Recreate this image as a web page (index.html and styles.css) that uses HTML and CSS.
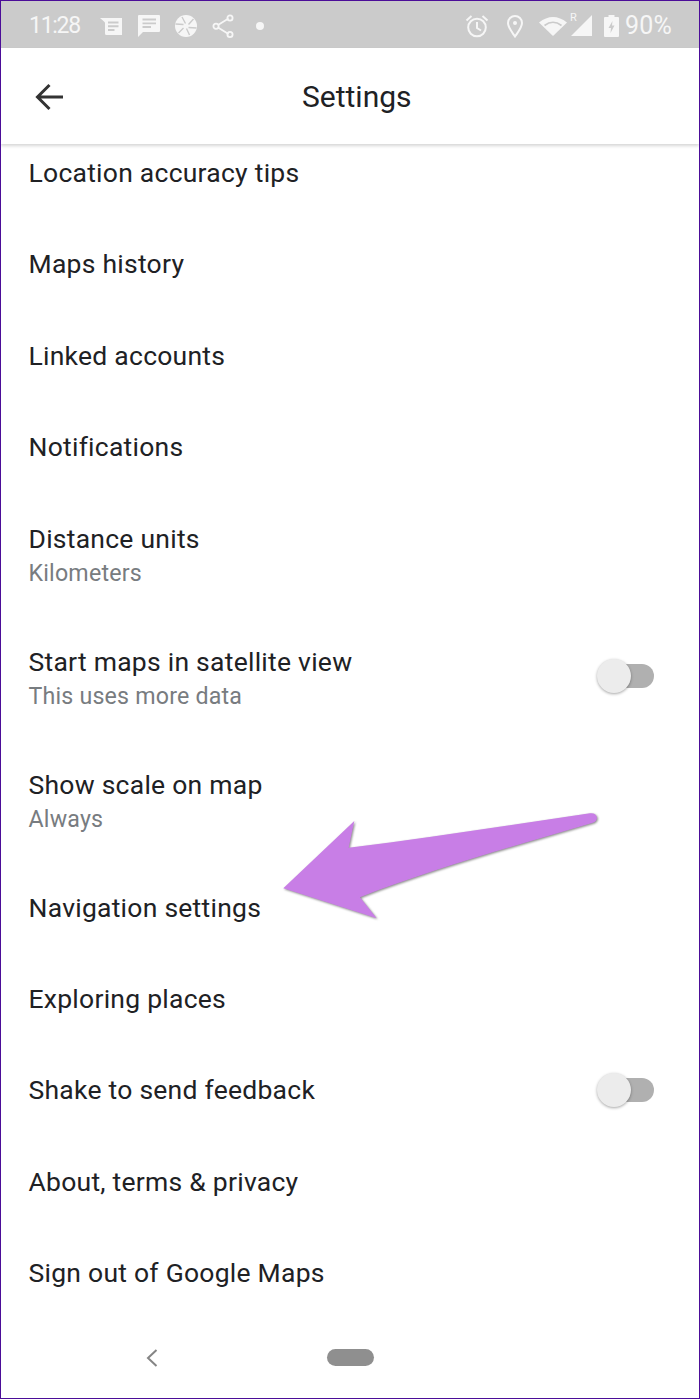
FILE: index.html
```html
<!doctype html>
<html>
<head>
  <meta charset="utf-8">
  <title>Settings</title>
  <link rel="stylesheet" href="styles.css">
</head>
<body>
<div class="phone">
  <div class="statusbar">
    <span class="clock">11:28</span>
    <div class="status-left">
      <svg viewBox="0 0 24 24"><path d="M0 4H22V21H6.500Q5 21 5 19.500V9Q5 8 4 7.500Z" fill="#f6f6f6"/><path d="M8 8.500H18.500M8 12.300H18.500M8 16H14.500" stroke="#cbcbcb" stroke-width="2"/></svg>
      <svg viewBox="0 0 24 24"><path d="M2 1H22Q23 1 23 2V17Q23 18 22 18H6L1 23V2Q1 1 2 1Z" fill="#f6f6f6"/><path d="M5.500 5.500H19M5.500 9.300H19M5.500 13H14" stroke="#cbcbcb" stroke-width="1.800"/></svg>
      <svg viewBox="0 0 24 24"><circle cx="12" cy="12" r="11" fill="#f6f6f6"/><path d="M8 3 11.500 9.500M19.500 5 14.500 10.500M22.500 14 14.500 13.500M15.500 21 12.500 14.500M4.500 19 9.500 14M1.500 10 9.500 10.500" stroke="#cbcbcb" stroke-width="1.400"/></svg>
      <svg viewBox="0 0 24 24" fill="none" stroke="#f6f6f6" stroke-width="1.800"><path d="M7 11 17.500 4.500M7 13.500 17.500 20"/><circle cx="5" cy="12.200" r="2.600"/><circle cx="19" cy="4" r="2.600"/><circle cx="19" cy="20.500" r="2.600"/></svg>
      <svg viewBox="0 0 24 24"><circle cx="12" cy="12" r="4" fill="#f6f6f6"/></svg>
    </div>
    <div class="status-right">
      <svg class="ic-alarm" viewBox="0 0 24 24" fill="none" stroke="#f6f6f6" stroke-width="2"><circle cx="12" cy="13.500" r="8.800"/><path d="M12 8V14L16 16.500M1.500 6.500 6.500 2M22.500 6.500 17.500 2"/></svg>
      <svg class="ic-pin" viewBox="0 0 18 24" fill="none" stroke="#f6f6f6" stroke-width="2"><path d="M9 22.500C6 18 2 13.500 2 9A7 7 0 0 1 16 9C16 13.500 12 18 9 22.500Z"/><circle cx="9" cy="9" r="2" fill="#f6f6f6" stroke="none"/></svg>
      <svg class="ic-wifi" viewBox="0 0 28 20"><path d="M0 6.500Q14 -4.500 28 6.500L14 20Z" fill="#f6f6f6"/><path d="M5.500 9.500Q14 3 22.500 9.500" fill="none" stroke="#cbcbcb" stroke-width="1.600"/></svg>
      <div class="signal">
        <span class="roam">R</span>
        <svg viewBox="0 0 21 21"><path d="M21 0V21H0Z" fill="#f6f6f6"/></svg>
      </div>
      <svg class="ic-batt" viewBox="0 0 15 22"><path d="M4.500 0H10.500V2H14Q15 2 15 3V21Q15 22 14 22H1Q0 22 0 21V3Q0 2 1 2H4.500Z" fill="#f6f6f6"/><path d="M8.500 6 4.500 13H7L6.500 18 10.500 10.500H8Z" fill="#cbcbcb"/></svg>
      <span class="pct">90%</span>
    </div>
  </div>

  <div class="appbar">
    <svg class="back" viewBox="0 0 28 28" fill="none" stroke="#333" stroke-width="3"><path d="M28 14H3M14.500 2 2.500 14 14.500 26"/></svg>
    <h1 class="title">Settings</h1>
  </div>

  <div class="list">
    <div class="row"><div class="name">Location accuracy tips</div></div>
    <div class="row"><div class="name">Maps history</div></div>
    <div class="row"><div class="name">Linked accounts</div></div>
    <div class="row"><div class="name">Notifications</div></div>
    <div class="row two">
      <div><div class="name">Distance units</div><div class="sub">Kilometers</div></div>
    </div>
    <div class="row two">
      <div><div class="name">Start maps in satellite view</div><div class="sub">This uses more data</div></div>
      <span class="toggle mid"><span class="knob"></span></span>
    </div>
    <div class="row two">
      <div><div class="name">Show scale on map</div><div class="sub">Always</div></div>
    </div>
    <div class="row"><div class="name">Navigation settings</div></div>
    <div class="row"><div class="name">Exploring places</div></div>
    <div class="row">
      <div class="name">Shake to send feedback</div>
      <span class="toggle"><span class="knob"></span></span>
    </div>
    <div class="row"><div class="name">About, terms &amp; privacy</div></div>
    <div class="row"><div class="name">Sign out of Google Maps</div></div>
  </div>

  <div class="navbar">
    <svg class="nav-back" viewBox="0 0 12 18" fill="none" stroke="#858585" stroke-width="2"><path d="M10.500 1 2 9 10.500 17"/></svg>
    <span class="pill"></span>
  </div>

  <!-- annotation arrow over the list -->
  <svg class="callout" viewBox="0 0 700 1399">
    <path d="M283.300 888.300 354.300 821 348.700 847.700C430 838 510 825 590 813.300Q596.500 812.800 597 818Q596.500 821.500 593 822.700C515 846 435 868 360 897.300L376.700 918.300Z" fill="#c87ee6"/>
  </svg>
</div>
</body>
</html>
```

FILE: styles.css
```css
* {
  box-sizing: border-box;
}
html, body {
  margin: 0;
  padding: 0;
}
.phone {
  position: relative;
  width: 700px;
  height: 1399px;
  border: 1px solid #4b0d98;
  background-color: #fff;
  display: flex;
  flex-direction: column;
  overflow: hidden;
  font-family: Roboto, "Liberation Sans", sans-serif;
  color: #202124;
}

/* Status bar */
.statusbar {
  height: 47px;
  flex-shrink: 0;
  background-color: #cbcbcb;
  color: #f6f6f6;
  display: flex;
  align-items: center;
  padding: 2px 27px 0 28px;
  font-size: 23px;
}
.clock {
  width: 70.5px;
  letter-spacing: -1.3px;
}
.statusbar svg {
  display: block;
}
.status-left {
  display: flex;
  gap: 13px;
}
.status-left svg {
  width: 24px;
  height: 24px;
}
.status-right {
  margin-left: auto;
  display: flex;
  align-items: center;
}
.ic-alarm {
  width: 24px;
  height: 24px;
}
.ic-pin {
  width: 18px;
  height: 24px;
  margin-left: 17px;
}
.ic-wifi {
  width: 28px;
  height: 20px;
  margin-left: 15px;
}
.signal {
  position: relative;
  width: 21px;
  height: 21px;
  margin-left: 4px;
}
.roam {
  position: absolute;
  left: -1px;
  top: -3px;
  font-size: 11px;
  line-height: 12px;
}
.ic-batt {
  width: 15px;
  height: 22px;
  margin-left: 12px;
}
.pct {
  margin-left: 6px;
  font-size: 25px;
  letter-spacing: 0.2px;
}

/* App bar */
.appbar {
  height: 96px;
  flex-shrink: 0;
  display: flex;
  align-items: center;
  position: relative;
  z-index: 1;
  padding-left: 34px;
  background-color: #fff;
  box-shadow: 0 2px 3px rgba(0, 0, 0, 0.16);
}
.back {
  width: 28px;
  height: 28px;
  margin-top: 2px;
}
.title {
  margin: 2px 0 0 239px;
  font-size: 30px;
  font-weight: 400;
  line-height: 34px;
  color: #202124;
}

/* Rows */
.list {
  flex: 1;
  padding-top: 12px;
}
.row {
  height: 91.4px;
  padding: 0 45px 0 27.5px;
  display: flex;
  justify-content: space-between;
  align-items: flex-start;
}
.row.two {
  height: 123px;
}
.name {
  font-size: 26.5px;
  line-height: 34px;
  letter-spacing: 0.25px;
  white-space: nowrap;
}
.sub {
  font-size: 23.2px;
  line-height: 34px;
  letter-spacing: 0.2px;
  color: #787c80;
}
.toggle {
  position: relative;
  width: 57px;
  height: 24px;
  margin-top: 5px;
  display: block;
}
.toggle.mid {
  margin-top: 19px;
}
.toggle::before {
  content: '';
  position: absolute;
  left: 12px;
  right: 0;
  top: 0;
  bottom: 0;
  border-radius: 12px;
  background-color: #b0b0b0;
}
.knob {
  position: absolute;
  left: 0;
  top: -5px;
  width: 34px;
  height: 34px;
  border-radius: 50%;
  background-color: #ececec;
  box-shadow: 0 1px 3px rgba(0, 0, 0, 0.35);
}

/* Bottom nav */
.navbar {
  height: 58px;
  flex-shrink: 0;
  display: flex;
  align-items: flex-start;
  padding: 1px 0 0 145px;
}
.nav-back {
  width: 12px;
  height: 18px;
}
.pill {
  width: 47px;
  height: 17px;
  margin-left: 169px;
  border-radius: 9px;
  background-color: #8f8f8f;
}

.callout {
  position: absolute;
  left: -1px;
  top: -1px;
  width: 700px;
  height: 1399px;
  z-index: 2;
  pointer-events: none;
  filter: drop-shadow(1px 1.5px 1px rgba(60, 60, 60, 0.6));
}
```
